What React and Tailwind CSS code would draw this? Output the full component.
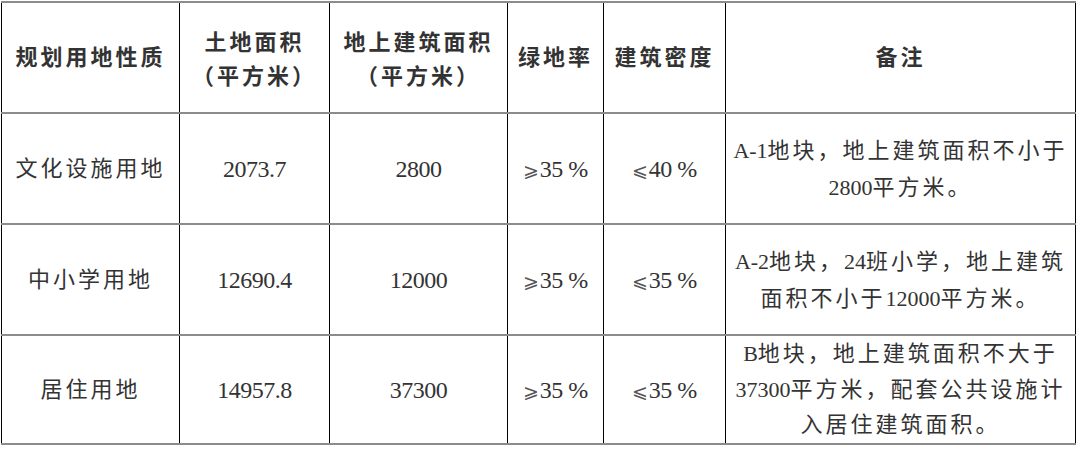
import React from "react";

const font = { fontFamily: "'Liberation Serif','Noto Sans CJK SC',serif" };

function Cell({ children, last = false, bold = false, className = "" }) {
  return (
    <div
      className={
        "flex items-center justify-center text-center border-l border-black " +
        (last ? "border-r " : "") +
        (bold ? "font-semibold " : "") +
        className
      }
    >
      {children}
    </div>
  );
}

function N({ children }) {
  return <span className="tracking-normal">{children}</span>;
}

function Pct({ sym, v }) {
  return (
    <span>
      <span className="text-[19px] text-[#555] mr-[1px]">{sym}</span>
      {v} %
    </span>
  );
}

function Row({ children, lastRow = false }) {
  return (
    <div
      className={
        "grid grid-cols-[178px_150px_178px_96px_122px_351px] h-[111px] border-t-2 border-t-[#8c8c8c] " +
        (lastRow ? "border-b-2 border-b-[#8c8c8c]" : "")
      }
    >
      {children}
    </div>
  );
}

export default function App() {
  const cjk = "text-[22px] tracking-[3px] leading-[34px]";
  const num = "text-[24px] tracking-[-0.5px]";
  return (
    <div className="w-[1080px] h-[451px] bg-white text-[#333] overflow-hidden" style={font}>
      <div className="ml-px mt-px w-[1075px]">
        <Row>
          <Cell bold className={cjk}>规划用地性质</Cell>
          <Cell bold className={cjk}>
            <div className="pt-[4px]">
              土地面积
              <br />
              （平方米）
            </div>
          </Cell>
          <Cell bold className={cjk}>
            <div className="pt-[4px]">
              地上建筑面积
              <br />
              （平方米）
            </div>
          </Cell>
          <Cell bold className={cjk}>绿地率</Cell>
          <Cell bold className={cjk}>建筑密度</Cell>
          <Cell bold last className={cjk}>备注</Cell>
        </Row>

        <Row>
          <Cell className={cjk}>文化设施用地</Cell>
          <Cell className={num}>2073.7</Cell>
          <Cell className={num}>2800</Cell>
          <Cell className={num}><Pct sym="⩾" v="35" /></Cell>
          <Cell className={num}><Pct sym="⩽" v="40" /></Cell>
          <Cell last className={cjk + " leading-[37px]"}>
            <div>
              <N>A-1</N>地块，地上建筑面积不小于
              <br />
              <N>2800</N>平方米。
            </div>
          </Cell>
        </Row>

        <Row>
          <Cell className={cjk}>中小学用地</Cell>
          <Cell className={num}>12690.4</Cell>
          <Cell className={num}>12000</Cell>
          <Cell className={num}><Pct sym="⩾" v="35" /></Cell>
          <Cell className={num}><Pct sym="⩽" v="35" /></Cell>
          <Cell last className={cjk + " leading-[37px]"}>
            <div>
              <N>A-2</N>地块，<N>24</N>班小学，地上建筑
              <br />
              面积不小于<N>12000</N>平方米。
            </div>
          </Cell>
        </Row>

        <Row lastRow>
          <Cell className={cjk}>居住用地</Cell>
          <Cell className={num}>14957.8</Cell>
          <Cell className={num}>37300</Cell>
          <Cell className={num}><Pct sym="⩾" v="35" /></Cell>
          <Cell className={num}><Pct sym="⩽" v="35" /></Cell>
          <Cell last className={cjk + " leading-[35.5px]"}>
            <div>
              <N>B</N>地块，地上建筑面积不大于
              <br />
              <N>37300</N>平方米，配套公共设施计
              <br />
              入居住建筑面积。
            </div>
          </Cell>
        </Row>
      </div>
    </div>
  );
}
